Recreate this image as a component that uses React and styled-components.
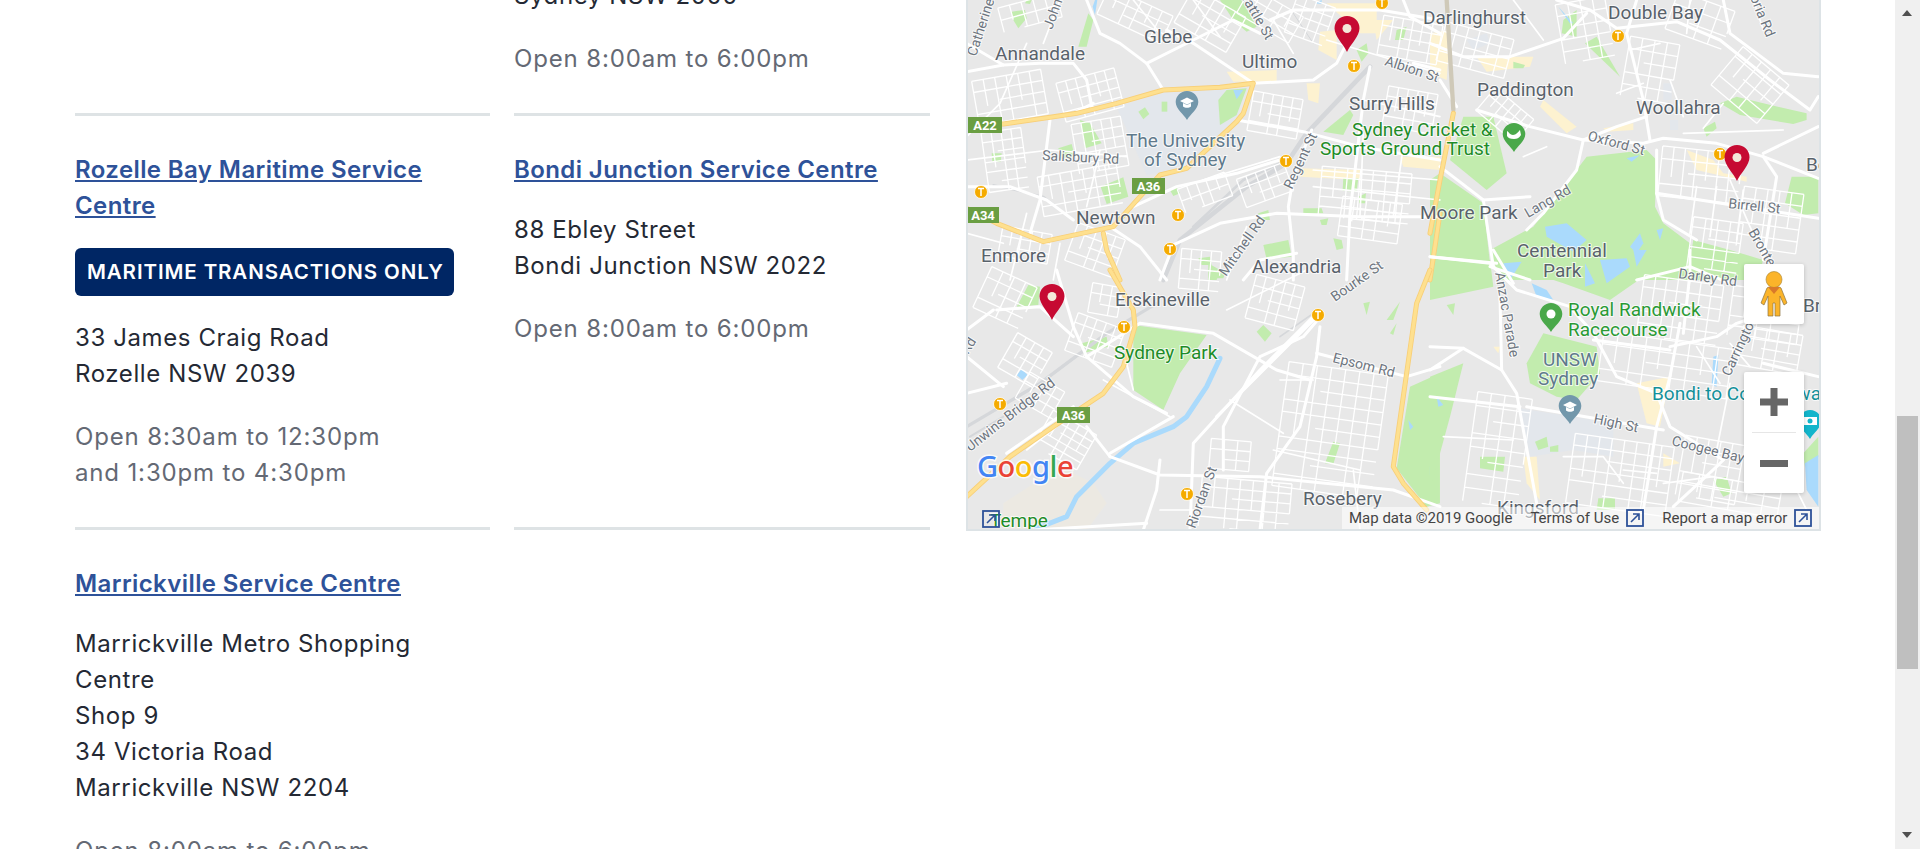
import React from 'react';
import styled, { createGlobalStyle } from 'styled-components';

const GlobalStyle = createGlobalStyle`
  html, body { margin: 0; padding: 0; height: 849px; overflow: hidden; background: #fff; }
  body { font-family: Inter, "Liberation Sans", sans-serif; color: #242934; }
`;

const Frame = styled.div`
  display: flex;
  height: 849px;
  overflow: hidden;
`;

const Page = styled.div`
  flex: 1;
  min-width: 0;
  overflow: hidden;
`;

const Scrolled = styled.div`
  display: flex;
  gap: 36px;
  margin-top: -22px;
  padding-left: 75px;
`;

const CentreGrid = styled.div`
  display: grid;
  grid-template-columns: 415px 416px;
  column-gap: 24px;
  width: 855px;
  flex: none;
  align-items: stretch;
`;

const Centre = styled.div`
  border-top: ${p => (p.$first ? '0' : '3px solid #dee3e5')};
  padding: ${p => (p.$first ? '0 0 36px' : '36px 0')};
`;

const Title = styled.a`
  display: block;
  font-size: 24px;
  line-height: 36px;
  font-weight: 600;
  letter-spacing: 0.4px;
  color: #2e5299;
  text-decoration: underline;
  margin-bottom: 24px;
`;

const Badge = styled.div`
  box-sizing: border-box;
  width: 379px;
  height: 48px;
  background: #002664;
  border-radius: 6px;
  color: #fff;
  font-size: 20.5px;
  font-weight: 600;
  letter-spacing: 0.9px;
  line-height: 48px;
  padding-left: 12px;
  margin-bottom: 24px;
  white-space: nowrap;
`;

const Address = styled.div`
  font-size: 24px;
  line-height: 36px;
  letter-spacing: 0.6px;
  color: #242934;
  margin-bottom: 27px;
`;

const Hours = styled.div`
  font-size: 24px;
  line-height: 36px;
  letter-spacing: 0.85px;
  color: #646974;
`;

const MapBox = styled.div`
  position: relative;
  flex: none;
  box-sizing: border-box;
  width: 855px;
  height: 553px;
  border: 2px solid #dde3e6;
  border-top: 0;
  overflow: hidden;
  background: #e8e8e8;
`;

const MapCanvas = styled.svg`
  display: block;
  width: 851px;
  height: 551px;
`;

const MapText = styled.text`
  font-family: Roboto, "Liberation Sans", sans-serif;
  font-size: ${p => (p.$small ? 14 : 19)}px;
  fill: ${p => p.$fill || '#59626b'};
  stroke: #fff;
  stroke-opacity: 0.75;
  stroke-width: 2px;
  paint-order: stroke;
`;

const ShieldText = styled.text`
  font-family: Roboto, "Liberation Sans", sans-serif;
  font-size: 13px;
  font-weight: 700;
  fill: #fff;
  text-anchor: middle;
`;

const LogoText = styled.text`
  font-family: "Noto Sans", sans-serif;
  font-size: 29px;
  font-weight: 500;
  stroke: #fff;
  stroke-width: 3px;
  stroke-opacity: 0.8;
  paint-order: stroke;
  letter-spacing: -0.5px;
`;

const ControlCard = styled.div`
  position: absolute;
  right: 15px;
  bottom: ${p => p.$bottom}px;
  width: 60px;
  background: #fff;
  border-radius: 2px;
  box-shadow: 0 1px 4px rgba(0, 0, 0, 0.2);
`;

const PegmanButton = styled.div`
  display: flex;
  align-items: center;
  justify-content: center;
  height: 60px;
`;

const ZoomButton = styled.div`
  display: flex;
  align-items: center;
  justify-content: center;
  height: 60px;
`;

const ZoomDivider = styled.div`
  height: 1px;
  margin: 0 8px;
  background: #e6e6e6;
`;

const Attribution = styled.div`
  position: absolute;
  left: 374px;
  right: 0;
  bottom: 0;
  height: 22px;
  display: flex;
  align-items: center;
  padding-left: 7px;
  background: rgba(255, 255, 255, 0.55);
  font-family: Roboto, "Liberation Sans", sans-serif;
  font-size: 15px;
  color: #444;
  white-space: nowrap;
`;

const AttrItem = styled.span`
  display: inline-flex;
  align-items: center;
  gap: 7px;
  margin-left: ${p => p.$gap || 0}px;
`;

const LinkIconWrap = styled.span`
  display: inline-flex;
  width: 18px;
  height: 18px;
`;

const TempeIcon = styled.span`
  position: absolute;
  left: 14px;
  bottom: 1px;
  display: inline-flex;
  width: 18px;
  height: 18px;
`;

const ScrollBar = styled.div`
  position: relative;
  flex: none;
  width: 25px;
  height: 849px;
  background: #f0f0f0;
`;

const ScrollThumb = styled.div`
  position: absolute;
  left: 2px;
  right: 2px;
  top: 416px;
  height: 253px;
  background: #bfbfbf;
`;

const ScrollArrow = styled.div`
  position: absolute;
  left: 7px;
  width: 0;
  height: 0;
  border-left: 5.5px solid transparent;
  border-right: 5.5px solid transparent;
  ${p => (p.$down
    ? 'bottom: 11px; border-top: 6px solid #505050;'
    : 'top: 10px; border-bottom: 6px solid #505050;')}
`;

const COLORS = { park: '#c2ecae', water: '#aadafc', campus: '#e3e7ec', sand: '#fdf2d0', road: '#fff', hwy: '#fee08f', hwyEdge: '#f8cf78', rail: '#d5d7da' };

// everything below is in the coords of four 3x crops of the map
const QUADS = [
  {
    origin: [960, 0],
    sand: ['1080,95 1130,90 1130,180 1075,150', '1100,10 1250,10 1250,100 1200,100', '1040,250 1080,250 1075,310 1045,300', '800,215 950,210 950,245 820,245', '1020,505 1200,510 1200,540 1020,530', '1320,470 1440,470 1440,510 1330,500', '1240,60 1300,60 1250,120'],
    campus: ['470,320 640,270 860,265 830,355 690,500 560,525'],
    parks: ['780,0 845,0 890,80 860,95 820,60', '155,35 195,30 200,55 175,85 160,60', '385,40 400,60 380,140 355,140', '775,300 800,270 860,265 830,345 780,375', '535,335 555,322 568,342 550,358', '605,305 622,305 622,335 605,335', '360,360 390,370 425,430 375,445', '295,445 335,432 345,470 305,478', '95,460 125,460 122,485 97,485', '422,560 490,532 505,590 440,612', '630,570 650,562 660,580 640,588', '1090,395 1170,330 1180,345 1150,405', '1190,150 1220,130 1225,160 1205,185', '1150,535 1195,535 1190,575 1148,572', '910,735 985,720 995,770 920,778', '745,790 780,810 770,840 745,840', '715,775 750,770 755,795 725,795', '1030,625 1085,625 1090,640 1030,640', '1120,715 1145,720 1150,745 1130,750', '895,640 925,630 930,660 895,660', '1310,90 1340,80 1330,120 1305,120', '1195,590 1218,580 1215,610 1198,610', '1080,660 1105,655 1100,675 1085,675', '200,0 215,0 210,12 195,10'],
    water: ['1065,10 1085,0 1085,12', '405,0 412,0 405,45 398,20', '820,270 850,270 830,298'],
    rail: [['610,840 660,720 860,560 980,490 1040,400 1230,200', 14], ['700,680 850,540 960,490', 8], ['100,555 250,590 340,660', 6], ['1000,40 1060,130', 3]],
    major: ['380,0 420,100 480,130 560,190 610,270', '20,215 130,195 240,190 340,190 380,240 395,320', '880,250 1060,240 1130,190 1170,110', '830,360 1030,395 1200,440 1440,480', '1055,390 1000,530 985,620 1000,760 1000,840', '640,735 780,670 950,640 1200,650 1440,650', '520,620 650,560 830,520 960,480', '20,560 150,560 260,600 340,660', '270,360 240,600 210,700', '450,680 540,740 620,840', '640,735 600,840', '880,250 700,130 620,90', '930,60 1000,30 1100,30 1260,30 1440,60', '560,190 700,120 820,60 900,100', '1230,200 1210,300 1170,640 1160,840', '850,840 900,780 1010,760', '20,130 130,195', '340,340 400,310', '1330,0 1350,50 1440,100', '1360,190 1440,210'],
    minor: ['200,130 120,310 20,410', '730,540 960,470', '1100,120 1300,180 1440,220', '20,480 270,450 500,470', '1060,510 1440,540', '420,450 380,620', '1000,160 940,60', '520,0 600,100', '700,0 780,110', '1210,300 1440,350', '1210,400 1200,650', '1300,650 1330,440', '1060,560 1440,600', '300,0 250,130', '20,700 130,730', '200,640 150,840', '300,730 280,840', '800,840 860,680'],
    hwy: ['20,372 130,372 270,352 350,340 470,310 610,270 780,262 880,250 850,340 830,365 680,505 600,525 540,590 460,680 390,695 250,725 110,670 20,625', '430,700 440,750 480,840', '1440,640 1410,840'],
  },
  {
    origin: [1430, 0],
    sand: ['770,450 850,480 880,520 950,530 950,545 800,510', '520,385 610,370 610,390 530,395', '0,100 60,90 50,240 0,220', '140,170 310,170 300,200 170,215', '340,300 440,380 410,400 330,320'],
    campus: ['110,120 170,100 180,130 130,150', '700,250 725,250 725,300 700,300', '720,360 745,360 745,390 720,390'],
    parks: ['310,680 470,470 650,450 680,480 675,620 700,670 780,730 800,840 210,840 180,750', '0,540 30,520 160,610 180,790 0,770', '100,350 190,350 230,520 170,570 60,480', '465,130 500,110 570,230', '400,60 440,30 440,110 395,100', '870,310 920,290 1000,310 1130,340 1130,360 1090,372 930,345', '820,385 855,365 860,385 830,410', '1065,610 1085,530 1165,530 1165,640 1120,645', '790,720 900,750 1000,780 980,840 770,840', '250,185 285,195 280,205 250,205'],
    water: ['345,680 410,670 470,720 430,755 350,710', '500,790 600,780 620,830 540,840', '220,800 275,785 240,825', '630,700 640,730 620,760 600,740', '680,690 700,685 690,720', '465,780 495,790 490,840 465,840', '590,475 630,465 605,485', '385,20 430,70 420,70'],
    rail: [],
    major: ['380,0 480,30 560,85 740,65 870,120 1020,240 1140,330 1165,290', '140,330 300,380 460,420 640,430 700,415 860,430 1000,470 1165,535', '460,420 440,510 340,640 290,690', '590,100 640,300 660,420', '460,420 560,380 650,350', '680,450 680,580 700,660 800,720', '680,580 1165,655', '1000,470 1040,530 1000,780', '30,500 160,600 190,800', '0,770 200,790', '160,600 300,590', '180,800 300,840', '880,0 900,100 1060,220 1165,230', '0,130 100,170 240,170 400,115 470,40', '80,320 30,240', '620,0 590,100', '1165,380 1000,460'],
    minor: ['900,540 960,680 1000,770', '760,400 1060,390', '820,385 880,310', '350,440 280,470', '250,0 340,120', '600,150 690,130', '560,280 640,250', '720,240 760,350', '780,0 770,100', '970,0 1000,90', '800,560 780,700', '860,560 840,710', '940,570 920,720'],
    hwy: ['70,340 30,540 0,700'],
    railBeige: ['50,0 70,330'],
  },
  {
    origin: [960, 270],
    sand: ['130,700 300,590 400,640 440,700 380,780 130,780'],
    campus: [],
    parks: ['170,110 205,45 240,50 235,105', '520,165 740,195 660,310 610,420 520,360', '365,220 440,200 445,230 370,250', '890,185 910,165 935,190 915,215', '1210,100 1230,95 1220,135', '1280,150 1320,95 1300,150', '1095,580 1120,515 1140,520 1120,582', '1290,190 1310,160 1300,195', '1310,595 1350,350 1440,310 1440,700 1400,710', '750,0 800,0 790,25 745,25'],
    water: ['170,315 185,297 203,315 187,330', '1345,450 1360,470 1350,480', '1410,590 1418,610 1410,615'],
    rail: [['20,470 240,340 440,190 590,100', 10], ['960,200 1060,130', 5], ['30,500 130,440', 6]],
    major: ['540,160 760,190 950,300 1050,330', '1090,130 1030,200 900,260 790,470 790,600', '1070,130 900,300 700,520 690,780', '1080,170 1070,260 1020,470 920,610 900,780', '450,560 600,615 900,620 1300,660 1440,710', '600,570 590,660 550,780', '380,470 450,560', '340,170 380,260 540,160', '110,120 240,110 340,200', '640,440 450,550', '1070,250 1340,320 1440,290', '20,370 140,340', '20,260 130,350', '100,120 20,180', '290,0 340,170', '620,430 520,380 380,260', '770,440 1080,130', '140,550 340,410', '220,780 560,760'],
    minor: ['810,390 970,490', '960,330 1060,330', '1040,0 800,120', '940,540 1200,600', '430,330 630,440', '500,280 520,360', '200,540 290,470', '600,720 700,720', '1180,600 1200,780'],
    hwy: ['450,0 520,120 525,170 490,290 430,370 280,470 150,560 20,680', '1410,0 1370,100 1300,590 1330,640 1400,720'],
    canal: '780,265 740,350 680,440 640,470 520,520 450,580 350,680 320,740 230,775',
  },
  {
    origin: [1430, 250],
    sand: ['620,400 720,380 690,530 650,520', '700,610 750,640 700,650', '280,620 320,620 330,750 290,700', '190,290 210,290 205,310'],
    campus: ['270,475 550,520 550,620 430,600 300,620'],
    parks: ['0,0 180,30 190,110 0,150', '700,0 780,0 780,80 700,40', '220,40 400,100 540,150 640,80 700,40 400,0 200,0', '290,340 340,250 500,290 510,370 440,450 380,440 300,400', '0,380 100,340 60,500 0,720', '150,620 225,620 220,665 150,655', '505,745 555,745 555,780 500,780', '850,690 890,680 905,730 880,740', '1120,610 1165,560 1165,620 1125,650', '315,575 350,560 355,590 325,600', '360,590 385,585 385,605 360,605', '50,165 75,160 70,195'],
    water: ['1125,640 1165,615 1165,770 1130,720', '20,440 40,465 25,470', '850,320 865,315 860,410 845,405', '220,40 275,35 240,90', '465,40 495,100 465,110', '510,30 590,25 600,50 530,100', '610,0 650,0 620,50', '305,100 350,120 370,150 320,140'],
    rail: [],
    major: ['0,20 180,40 260,120 420,170 490,250 560,380 680,430 720,530 880,630', '190,0 250,100', '210,140 215,360 260,430 320,760', '0,290 100,295 215,360', '290,470 700,540', '720,290 860,260 920,220 950,210', '490,270 720,300', '750,220 720,380 680,530 640,780', '1000,340 1165,380', '880,630 860,650 730,770', '0,360 100,295', '620,90 780,50 900,100', '270,470 0,440', '780,0 780,70 760,250'],
    minor: ['800,290 870,400', '860,600 900,400', '1010,650 1090,700', '1090,580 1010,650', '700,700 850,680', '40,560 250,570', '400,620 520,620 580,700', '580,660 680,670', '1090,700 1130,780', '960,350 900,280'],
    hwy: [],
  },
];

const BLOCKS = [
  [975, 75, 70, 45, 6, 4, -10], [1060, 75, 60, 40, 6, 4, -15], [1075, 120, 50, 50, 5, 5, -10], [985, 130, 40, 60, 4, 6, -8],
  [1040, 170, 80, 40, 7, 4, -10], [1000, 0, 60, 25, 5, 2, -15], [1100, 0, 70, 30, 6, 3, 25], [1180, 0, 60, 40, 5, 4, 30],
  [1240, 0, 60, 30, 5, 3, 30], [1250, 95, 50, 40, 5, 4, 10], [1290, 0, 40, 40, 4, 4, 20], [1320, 170, 90, 50, 7, 5, 5],
  [1240, 170, 50, 30, 5, 3, -20], [1180, 180, 50, 25, 5, 2, -20], [1000, 230, 50, 30, 5, 3, 10], [1070, 230, 50, 40, 5, 4, 20],
  [1180, 250, 40, 40, 4, 4, 5], [1250, 280, 50, 45, 5, 4, 15], [1380, 20, 60, 40, 6, 4, 10], [1440, 30, 70, 40, 6, 4, 15],
  [1385, 90, 50, 40, 5, 4, 10], [1480, 100, 50, 30, 6, 3, 40], [1560, 0, 50, 60, 4, 5, -10], [1625, 40, 50, 60, 4, 5, 10],
  [1670, 0, 60, 40, 4, 3, 20], [1720, 60, 60, 50, 5, 4, 40], [1660, 150, 80, 50, 7, 4, 6], [1740, 190, 60, 60, 5, 5, 8],
  [1690, 220, 50, 50, 4, 5, 8], [1640, 280, 80, 60, 7, 5, 8], [1730, 290, 70, 50, 5, 5, 8], [1470, 395, 55, 110, 4, 8, 8],
  [1570, 440, 100, 70, 8, 6, 8], [1600, 340, 130, 50, 9, 4, 8], [1680, 440, 60, 60, 5, 5, 10], [1740, 330, 60, 40, 5, 4, 10],
  [1680, 480, 100, 30, 6, 3, 10], [1280, 368, 100, 125, 7, 10, 8], [1005, 340, 40, 40, 4, 4, 30], [1070, 320, 50, 40, 5, 4, 20],
  [1040, 420, 50, 40, 5, 5, 30], [1200, 480, 90, 50, 7, 5, 5], [980, 275, 50, 45, 4, 4, 25], [1090, 285, 30, 30, 3, 3, 10],
  [1020, 380, 40, 30, 4, 3, 30], [1210, 440, 40, 30, 3, 3, 5], [1340, 200, 60, 40, 5, 4, 8],
];

const LABELS = [
  ['Annandale', 995, 60], ['Glebe', 1144, 43], ['Ultimo', 1242, 68], ['Surry Hills', 1349, 110], ['Newtown', 1076, 224],
  ['Enmore', 981, 262], ['Alexandria', 1252, 273], ['Moore Park', 1420, 219], ['Darlinghurst', 1423, 24], ['Double Bay', 1608, 19],
  ['Paddington', 1477, 96], ['Woollahra', 1636, 114], ['Centennial', 1517, 257], ['Park', 1543, 277], ['Be', 1806, 171],
  ['Erskineville', 1115, 306], ['Rosebery', 1303, 505], ['Kingsford', 1497, 514], ['Br', 1803, 312],
  ['The University', 1126, 147, '#5f7a8c'], ['of Sydney', 1144, 166, '#5f7a8c'], ['UNSW', 1543, 366, '#5f7a8c'], ['Sydney', 1538, 385, '#5f7a8c'],
  ['Sydney Cricket &', 1352, 136, '#1e8c28'], ['Sports Ground Trust', 1320, 155, '#1e8c28'], ['Sydney Park', 1114, 359, '#1e8c28'],
  ['Royal Randwick', 1568, 316, '#2a9a35'], ['Racecourse', 1568, 336, '#2a9a35'], ['Bondi to Coogee walk', 1652, 400, '#13909a'],
];

const ROAD_LABELS = [
  ['Catherine St', 976, 57, -72], ['Johnston St', 1052, 30, -70], ['Wattle St', 1238, -8, 60], ['Albion St', 1384, 65, 18],
  ['Salisbury Rd', 1042, 160, 3], ['Regent St', 1292, 190, -65], ['Mitchell Rd', 1226, 277, -55], ['Oxford St', 1587, 140, 15],
  ['Birrell St', 1728, 208, 6], ['Bronte Rd', 1748, 232, 60], ['Lang Rd', 1528, 218, -30], ['Darley Rd', 1678, 278, 8],
  ['Anzac Parade', 1495, 273, 80], ['Carrington', 1730, 377, -65], ['High St', 1593, 423, 12], ['Coogee Bay Rd', 1671, 445, 14],
  ['Bourke St', 1335, 302, -35], ['Epsom Rd', 1332, 362, 14], ['Unwins Bridge Rd', 970, 452, -38], ['Riordan St', 1195, 529, -70],
  ['Rd', 968, 355, -58], ['Victoria Rd', 1741, -25, 68],
];

const SHIELDS = [['A22', 968, 117, 34], ['A36', 1132, 178, 33], ['A34', 967, 207, 32], ['A36', 1057, 407, 33]];
const TRAINS = [[1354, 66], [1286, 161], [981, 192], [1178, 215], [1170, 249], [1382, 3], [1618, 36], [1720, 154], [1124, 327], [1318, 315], [1000, 404], [1187, 494]];
const PINS = [[1347, 16], [1737, 145], [1052, 284]];

const PIN_PATH = 'M0 0c-7 0-12.5 5.4-12.5 12.3 0 8 9 16 12.5 23.7 3.5-7.7 12.5-15.7 12.5-23.7C12.5 5.4 7 0 0 0z';
const POI_PATH = 'M0-12c-6.300 0-11.300 5-11.300 11 0 7 8 12 11.300 18 3.300-6 11.300-11 11.300-18C11.300-7 6.300-12 0-12z';

// a patch of streets; every third line stops short so it doesn't read as a clean grid
const blockLines = ([x, y, w, h, cols, rows]) => {
  let d = '';
  for (let i = 0; i <= cols; i++) d += `M${x + (w * i) / cols} ${y}V${y + (i % 3 === 1 ? h * 0.6 : h)}`;
  for (let j = 0; j <= rows; j++) d += `M${x + (j % 3 === 2 ? w * 0.35 : 0)} ${y + (h * j) / rows}H${x + w}`;
  return d;
};

const Poly = ({ points, fill }) => <polygon points={points} fill={fill} />;

const Line = ({ points, color, width }) => (
  <polyline points={points} fill="none" stroke={color} strokeWidth={width} strokeLinejoin="round" strokeLinecap="round" />
);

const quadTransform = q => `translate(${q.origin[0]} ${q.origin[1]}) scale(0.3333)`;

const CityMap = () => (
  <MapCanvas viewBox="968 -22 851 551">
    <rect x="968" y="-22" width="851" height="551" fill="#e8e8e8" />
    {QUADS.map((q, i) => (
      <g key={i} transform={quadTransform(q)}>
        {q.sand.map((p, k) => <Poly key={k} points={p} fill={i === 2 ? '#ece9e2' : COLORS.sand} />)}
        {q.campus.map((p, k) => <Poly key={k} points={p} fill={COLORS.campus} />)}
        {q.parks.map((p, k) => <Poly key={k} points={p} fill={COLORS.park} />)}
        {q.water.map((p, k) => <Poly key={k} points={p} fill={COLORS.water} />)}
        {q.canal && <Line points={q.canal} color={COLORS.water} width={15} />}
        {q.rail.map(([p, w], k) => <Line key={k} points={p} color={COLORS.rail} width={w} />)}
      </g>
    ))}
    {BLOCKS.map((b, i) => (
      <path
        key={i}
        d={blockLines(b)}
        stroke="#fff"
        strokeWidth="1.300"
        fill="none"
        transform={`rotate(${b[6]} ${b[0] + b[2] / 2} ${b[1] + b[3] / 2})`}
      />
    ))}
    {QUADS.map((q, i) => (
      <g key={i} transform={quadTransform(q)}>
        {q.minor.map((p, k) => <Line key={k} points={p} color={COLORS.road} width={5} />)}
        {q.major.map((p, k) => <Line key={k} points={p} color={COLORS.road} width={9} />)}
        {(q.railBeige || []).map((p, k) => <Line key={k} points={p} color="#cfc9b8" width={13} />)}
        {q.hwy.map((p, k) => (
          <g key={k}>
            <Line points={p} color={COLORS.hwyEdge} width={15} />
            <Line points={p} color={COLORS.hwy} width={10} />
          </g>
        ))}
      </g>
    ))}

    {SHIELDS.map(([t, x, y, w], i) => (
      <g key={i}>
        <rect x={x} y={y} width={w} height={16} fill="#6a9e42" />
        <ShieldText x={x + w / 2} y={y + 13}>{t}</ShieldText>
      </g>
    ))}

    {TRAINS.map(([x, y], i) => (
      <g key={i}>
        <circle cx={x} cy={y} r="6.500" fill="#f5ab00" stroke="#fff" strokeWidth="0.800" />
        <path d={`M${x - 3} ${y - 3.500}h6M${x} ${y - 3.500}v7.500`} stroke="#fff" strokeWidth="1.500" fill="none" />
      </g>
    ))}

    {LABELS.map(([t, x, y, fill], i) => <MapText key={i} x={x} y={y} $fill={fill}>{t}</MapText>)}
    {ROAD_LABELS.map(([t, x, y, a], i) => (
      <MapText key={i} x={x} y={y} $small $fill="#6e7680" transform={`rotate(${a} ${x} ${y})`}>{t}</MapText>
    ))}

    {/* university and stadium markers */}
    {[[1187, 103, '#7297ab'], [1570, 407, '#7297ab']].map(([x, y, c], i) => (
      <g key={i} transform={`translate(${x} ${y})`}>
        <path d={POI_PATH} fill={c} />
        <path d="M-7-2 0-5.500 7-2 0 1.500zM-4 0v3.500c2 1.800 6 1.800 8 0V0L0 2z" fill="#fff" />
      </g>
    ))}
    <g transform="translate(1514 135)">
      <path d={POI_PATH} fill="#4aa84a" />
      <path d="M-7-4c2 1 3 4 6 4 3 0 5-3 7-5l1 5c-2 3-4 4-7 4-4 0-6-1-7-3z" fill="#fff" />
    </g>
    <g transform="translate(1551 315)">
      <path d={POI_PATH} fill="#4aa84a" />
      <circle r="4.500" cy="-1" fill="#fff" />
    </g>
    <g transform="translate(1810 422)">
      <path d={POI_PATH} fill="#12b5cb" />
      <path d="M-7-5h14v8H-7z" fill="#fff" />
      <circle r="2.500" cy="-1" fill="#12b5cb" />
    </g>

    {PINS.map(([x, y], i) => (
      <g key={i} transform={`translate(${x} ${y})`}>
        <path d={PIN_PATH} fill="#c60a32" />
        <circle cy="12.500" r="4.500" fill="#f4e9da" />
      </g>
    ))}

    <LogoText x="977" y="477">
      <tspan fill="#4285f4">G</tspan>
      <tspan fill="#ea4335">o</tspan>
      <tspan fill="#fbbc05">o</tspan>
      <tspan fill="#4285f4">g</tspan>
      <tspan fill="#34a853">l</tspan>
      <tspan fill="#ea4335">e</tspan>
    </LogoText>
    <MapText x="990" y="527" $fill="#1e8c28">Tempe</MapText>
  </MapCanvas>
);

const LinkIcon = () => (
  <svg width="18" height="18" viewBox="0 0 18 18">
    <rect x="1" y="1" width="16" height="16" fill="none" stroke="#2e5299" strokeWidth="1.800" />
    <path d="M5 13 13 5M7 5h6v6" fill="none" stroke="#2e5299" strokeWidth="1.600" />
  </svg>
);

const Pegman = () => (
  <svg width="28" height="46" viewBox="0 0 28 46">
    <path d="M7 17c2-2 12-2 14 0l6 15-3 2-4-9v20h-5V32h-2v13H8V25l-4 9-3-2z" fill="#fbb42a" stroke="#8d7440" strokeWidth="0.700" />
    <circle cx="14" cy="8.500" r="8" fill="#fbb42a" stroke="#a5812f" strokeWidth="0.600" />
    <path d="M8 16h12l-6 7z" fill="#d9792a" />
  </svg>
);

const PlusIcon = () => (
  <svg width="28" height="28" viewBox="0 0 28 28"><path d="M0 10.500h10.500V0h7v10.500H28v7H17.500V28h-7V17.500H0z" fill="#666" /></svg>
);

const MinusIcon = () => (
  <svg width="28" height="7" viewBox="0 0 28 7"><path d="M0 0h28v7H0z" fill="#666" /></svg>
);

const App = () => (
  <>
    <GlobalStyle />
    <Frame>
      <Page>
        <Scrolled>
          <CentreGrid>
            <Centre $first />
            <Centre $first>
              <Address>Sydney NSW 2000</Address>
              <Hours>Open 8:00am to 6:00pm</Hours>
            </Centre>

            <Centre>
              <Title>Rozelle Bay Maritime Service Centre</Title>
              <Badge>MARITIME TRANSACTIONS ONLY</Badge>
              <Address>33 James Craig Road<br />Rozelle NSW 2039</Address>
              <Hours>Open 8:30am to 12:30pm<br />and 1:30pm to 4:30pm</Hours>
            </Centre>
            <Centre>
              <Title>Bondi Junction Service Centre</Title>
              <Address>88 Ebley Street<br />Bondi Junction NSW 2022</Address>
              <Hours>Open 8:00am to 6:00pm</Hours>
            </Centre>

            <Centre>
              <Title>Marrickville Service Centre</Title>
              <Address>Marrickville Metro Shopping<br />Centre<br />Shop 9<br />34 Victoria Road<br />Marrickville NSW 2204</Address>
              <Hours>Open 8:00am to 6:00pm</Hours>
            </Centre>
            <Centre />
          </CentreGrid>

          <MapBox>
            <CityMap />
            <TempeIcon><LinkIcon /></TempeIcon>
            <ControlCard $bottom={205}>
              <PegmanButton><Pegman /></PegmanButton>
            </ControlCard>
            <ControlCard $bottom={36}>
              <ZoomButton><PlusIcon /></ZoomButton>
              <ZoomDivider />
              <ZoomButton><MinusIcon /></ZoomButton>
            </ControlCard>
            <Attribution>
              <AttrItem>Map data ©2019 Google</AttrItem>
              <AttrItem $gap={18}>Terms of Use <LinkIconWrap><LinkIcon /></LinkIconWrap></AttrItem>
              <AttrItem $gap={18}>Report a map error <LinkIconWrap><LinkIcon /></LinkIconWrap></AttrItem>
            </Attribution>
          </MapBox>
        </Scrolled>
      </Page>
      <ScrollBar>
        <ScrollArrow />
        <ScrollThumb />
        <ScrollArrow $down />
      </ScrollBar>
    </Frame>
  </>
);

export default App;
